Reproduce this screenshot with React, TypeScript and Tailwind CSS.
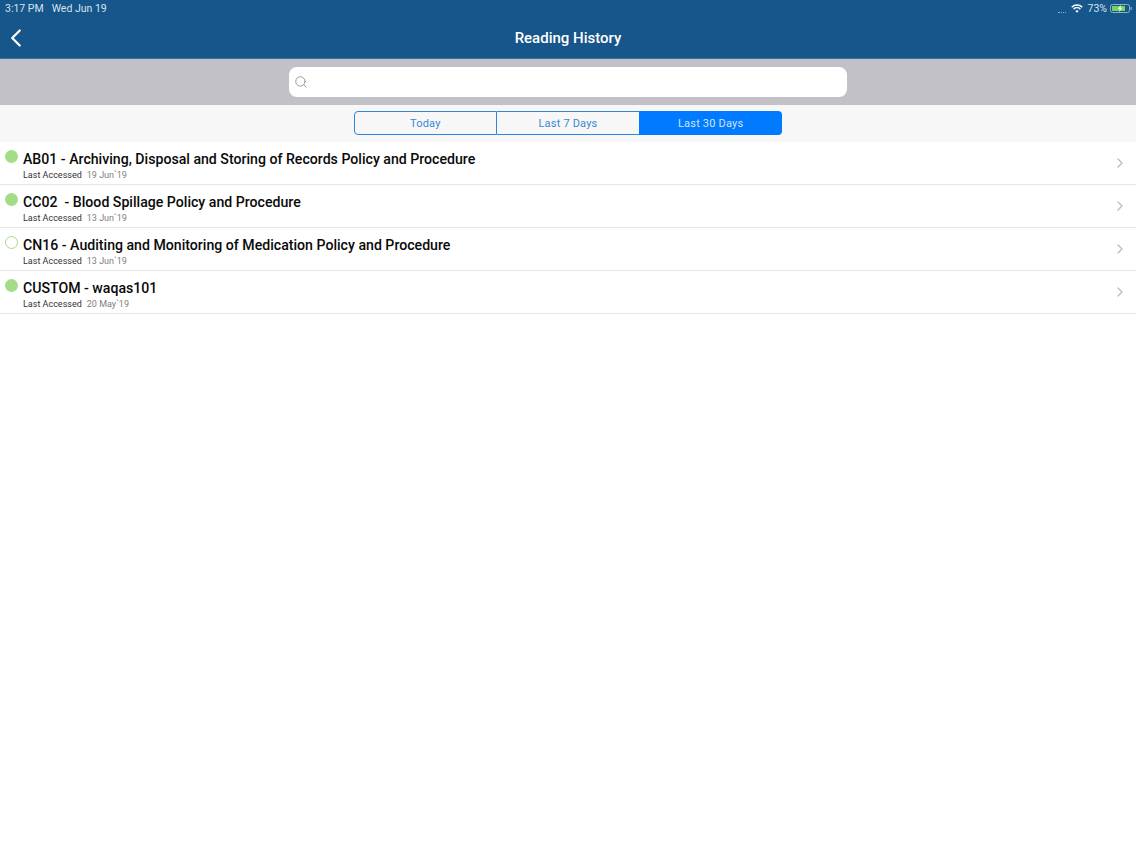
import { ChevronLeft, ChevronRight, Search } from "lucide-react";

const rows = [
  { title: "AB01 - Archiving, Disposal and Storing of Records Policy and Procedure", date: "19 Jun`19", read: true },
  { title: "CC02  - Blood Spillage Policy and Procedure", date: "13 Jun`19", read: true },
  { title: "CN16 - Auditing and Monitoring of Medication Policy and Procedure", date: "13 Jun`19", read: false },
  { title: "CUSTOM - waqas101", date: "20 May`19", read: true },
];

function WifiIcon() {
  return (
    <svg width="12" height="9" viewBox="0 0 12 9" fill="none" stroke="#fff" strokeWidth="1.5">
      <path d="M0.7 3.2C3.7 0.4 8.3 0.4 11.3 3.2" />
      <path d="M2.6 5.1C4.5 3.4 7.5 3.4 9.4 5.1" />
      <path d="M6 8.8L4.3 6.9C5.3 6.1 6.7 6.1 7.7 6.9Z" fill="#fff" stroke="none" />
    </svg>
  );
}

function BatteryIcon() {
  return (
    <svg width="22" height="9" viewBox="0 0 22 9">
      <rect x="0.5" y="0.5" width="19" height="8" rx="2" fill="none" stroke="#8fb0cb" />
      <rect x="2" y="2" width="13" height="5" fill="#6fd65c" />
      <rect x="20.5" y="3" width="1.2" height="3" fill="#8fb0cb" />
      <path d="M11 0.8L7.8 5H9.8L9 8.2L12.4 3.8H10.3Z" fill="#fff" />
    </svg>
  );
}

export default function App() {
  return (
    <div className="h-[852px] bg-white font-['Roboto',sans-serif] overflow-hidden">
      <header className="h-[59px] bg-[#17568a] border-b border-[#3f7197] text-white">
        <div className="h-[17px] flex items-center justify-between pl-[5px] pr-[4px] text-[10.5px] text-[#d5e4f0]">
          <div className="flex gap-[8px]">
            <span>3:17 PM</span>
            <span>Wed Jun 19</span>
          </div>
          <div className="flex items-center">
            <span className="w-[8px] h-[5px] mr-[5px] mt-[3px] border-b border-dotted border-[#8fb0cb]"></span>
            <WifiIcon />
            <span className="ml-[5px] mr-[3px]">73%</span>
            <BatteryIcon />
          </div>
        </div>
        <div className="relative h-[41px] flex items-center justify-center">
          <ChevronLeft className="absolute left-[1px] top-[6px] w-[30px] h-[30px]" strokeWidth={1.8} />
          <h1 className="text-[15px] font-medium pt-[1px]">Reading History</h1>
        </div>
      </header>

      <div className="h-[46px] bg-[#c1c1c7] flex items-start justify-center pt-[8px]">
        <div className="w-[558px] h-[30px] bg-white rounded-[8px] flex items-center pl-[5px]">
          <Search className="w-[14px] h-[14px] text-[#8a8a8e]" strokeWidth={1.5} />
        </div>
      </div>

      <div className="h-[37px] bg-[#f7f7f8] flex justify-center pt-[6px]">
        <div className="w-[428px] h-[24px] grid grid-cols-3 text-[11px] tracking-[0.2px]">
          <div className="flex items-center justify-center pt-[2px] text-[#3a88cf] border border-[#2f86dc] rounded-l-[4px]">Today</div>
          <div className="flex items-center justify-center pt-[2px] text-[#3a88cf] border-y border-[#2f86dc]">Last 7 Days</div>
          <div className="flex items-center justify-center pt-[2px] bg-[#007aff] text-[#cfe4fb] rounded-r-[4px]">Last 30 Days</div>
        </div>
      </div>

      <ul>
        {rows.map((row) => (
          <li key={row.title} className="h-[43px] border-b border-[#e6e6e6] flex items-start pl-[5px] pr-[8px]">
            <span
              className={
                row.read
                  ? "w-[13px] h-[13px] mt-[8px] rounded-full bg-[#a3dd85] shrink-0"
                  : "w-[13px] h-[13px] mt-[8px] rounded-full border border-[#a3dd85] shrink-0"
              }
            ></span>
            <div className="ml-[5px] flex-1 min-w-0 pt-[7px]">
              <div className="text-[14.13px] leading-[20px] font-medium text-[#0a0a0a] whitespace-pre">{row.title}</div>
              <div className="text-[9px] leading-[12px] flex gap-[5px]">
                <span className="text-[#333]">Last Accessed</span>
                <span className="text-[#808080]">{row.date}</span>
              </div>
            </div>
            <ChevronRight className="w-[16px] h-[16px] mt-[13px] text-[#bdbdbd]" strokeWidth={2} />
          </li>
        ))}
      </ul>
    </div>
  );
}
